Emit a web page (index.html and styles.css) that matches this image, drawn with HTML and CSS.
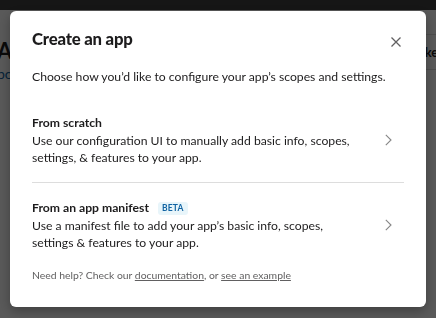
FILE: index.html
```html
<!DOCTYPE html>
<html lang="en">
<head>
  <meta charset="UTF-8" />
  <title>Your Apps</title>
  <link rel="stylesheet" href="styles.css">
</head>
<body>
  <div class="topbar"></div>
  <div class="page">
    <div class="page-left">
      <h1 class="page-title">Apps</h1>
      <a class="page-link" href="#">bot</a>
    </div>
    <div class="page-right">
      <div class="page-tab">Tokens</div>
    </div>
  </div>

  <div class="overlay">
    <div class="modal">
      <div class="modal-header">
        <h2 class="modal-title">Create an app</h2>
        <button class="close-btn" aria-label="Close">
          <svg viewBox="0 0 10 10" width="10" height="10">
            <path d="M0.5 0.5 L9.5 9.5 M9.5 0.5 L0.5 9.5" stroke="#616061" stroke-width="1.3" fill="none"/>
          </svg>
        </button>
      </div>
      <p class="modal-desc">Choose how you’d like to configure your app’s scopes and settings.</p>

      <div class="option">
        <div class="option-body">
          <div class="option-title">From scratch</div>
          <div class="option-text">Use our configuration UI to manually add basic info, scopes, settings, &amp; features to your app.</div>
        </div>
        <svg class="chevron" viewBox="0 0 7 12" width="7" height="12">
          <path d="M0.8 0.8 L6 6 L0.8 11.2" stroke="#868686" stroke-width="1.1" fill="none"/>
        </svg>
      </div>

      <div class="option">
        <div class="option-body">
          <div class="option-title">From an app manifest <span class="badge">BETA</span></div>
          <div class="option-text">Use a manifest file to add your app’s basic info, scopes, settings &amp; features to your app.</div>
        </div>
        <svg class="chevron" viewBox="0 0 7 12" width="7" height="12">
          <path d="M0.8 0.8 L6 6 L0.8 11.2" stroke="#868686" stroke-width="1.1" fill="none"/>
        </svg>
      </div>

      <p class="modal-footer">Need help? Check our <a href="#">documentation</a>, or <a href="#">see an example</a></p>
    </div>
  </div>
</body>
</html>
```

FILE: styles.css
```css
* { box-sizing: border-box; margin: 0; padding: 0; }

body {
  font-family: Lato, 'Noto Sans', sans-serif;
  background-color: #fff;
  color: #1d1c1d;
  height: 318px;
  overflow: hidden;
}

.topbar {
  height: 10px;
  background-color: #3f3f3f;
}

.page {
  display: flex;
  justify-content: space-between;
}

.page-left {
  margin-left: -3px;
  padding-top: 29px;
}

.page-title {
  font-size: 22px;
  font-weight: 700;
  line-height: 24px;
}

.page-link {
  font-size: 14px;
  color: #1264a3;
  text-decoration: none;
  line-height: 20px;
}

.page-right {
  width: 30px;
  margin-top: 24px;
  border-top: 1px solid #ddd;
}

.page-tab {
  font-size: 13px;
  font-weight: 700;
  padding: 9px 0 9px 0;
  margin-left: 5px;
  border-bottom: 1px solid #ddd;
  white-space: nowrap;
}

.overlay {
  position: fixed;
  top: 0; left: 0;
  width: 100%; height: 100%;
  background: rgba(0, 0, 0, 0.65);
  display: flex;
  justify-content: center;
  align-items: center;
}

.modal {
  background: #fff;
  width: 416px;
  height: 296px;
  border-radius: 6px;
  padding: 16px 22px 0;
  box-shadow: 0 4px 12px rgba(0, 0, 0, 0.3);
}

.modal-header {
  display: flex;
  justify-content: space-between;
  align-items: flex-start;
}

.modal-title {
  font-size: 16.7px;
  font-weight: 900;
  line-height: 24px;
  letter-spacing: -0.2px;
}

.close-btn {
  background: none;
  border: none;
  width: 24px;
  height: 24px;
  margin: 3px -4px 0 0;
  display: flex;
  align-items: center;
  justify-content: center;
  cursor: pointer;
}

.modal-desc {
  font-size: 12.2px;
  line-height: 18px;
  margin-top: 14px;
  margin-bottom: 13px;
}

.option {
  display: flex;
  align-items: center;
  justify-content: space-between;
  padding: 15px 12px 16px 0;
  cursor: pointer;
}

.option + .option {
  border-top: 1px solid #dddddd;
  padding-top: 16px;
  padding-bottom: 15px;
}

.option-body {
  width: 330px;
}

.option-title {
  font-size: 12.2px;
  font-weight: 700;
  line-height: 18px;
}

.option-text {
  font-size: 12.2px;
  line-height: 17px;
}

.badge {
  display: inline-block;
  margin-left: 6px;
  padding: 0 4px;
  font-size: 8.5px;
  font-weight: 700;
  line-height: 13px;
  color: #1264a3;
  background-color: #e8f5fa;
  border-radius: 3px;
  vertical-align: 1px;
  letter-spacing: 0.2px;
}

.modal-footer {
  font-size: 10.4px;
  line-height: 14px;
  color: #616061;
  margin-top: 2px;
}

.modal-footer a {
  color: #616061;
}
```
